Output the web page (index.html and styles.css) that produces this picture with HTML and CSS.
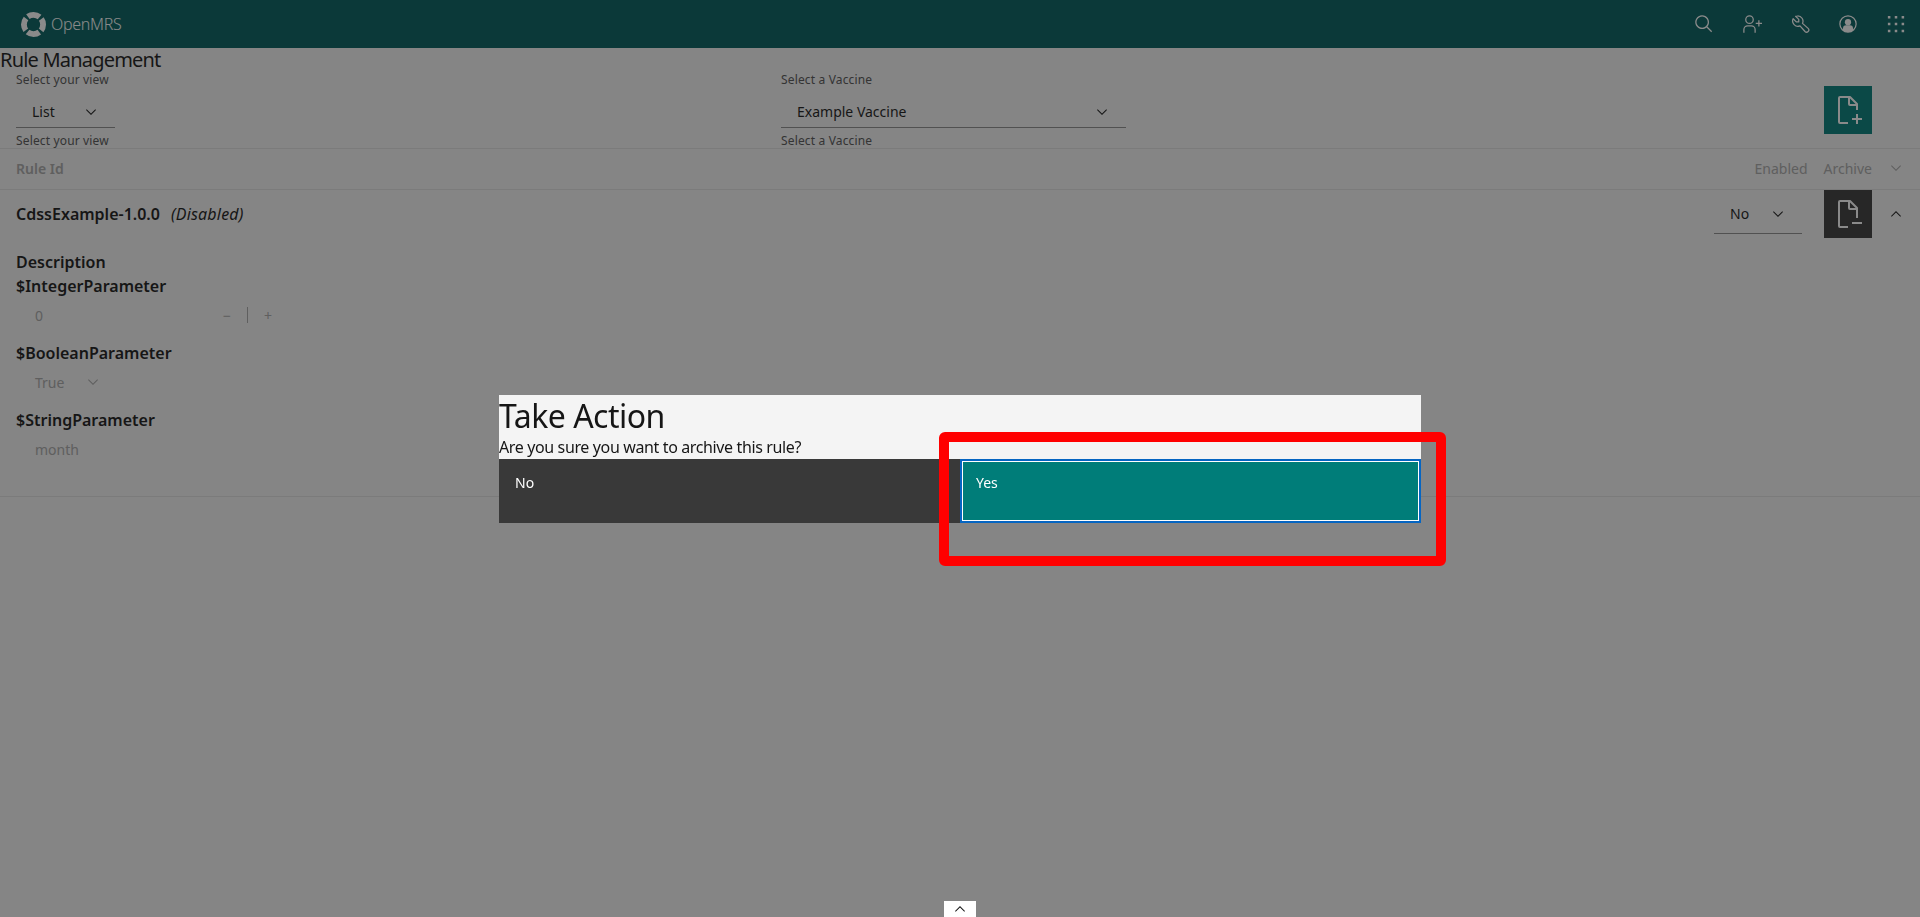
FILE: index.html
```html
<!DOCTYPE html>
<html lang="en">
<head>
    <meta charset="UTF-8">
    <meta name="viewport" content="width=device-width, initial-scale=1.0">
    <title>Rule Management</title>
    <link rel="stylesheet" href="styles.css">
</head>
<body>
    <header class="topbar">
        <a class="brand">
            <svg class="brand-logo" viewBox="0 0 24 24" aria-hidden="true">
                <circle cx="12" cy="12" r="9.2" fill="none" stroke="#fff" stroke-width="5.6" stroke-dasharray="12.05 2.4" stroke-dashoffset="6.02"/>
            </svg>
            <span>OpenMRS</span>
        </a>
        <nav class="topbar-actions">
            <button class="icon-btn"><svg viewBox="0 0 32 32"><path d="M29 27.590l-7.550-7.550a11.020 11.020 0 1 0-1.410 1.410L27.590 29zM4 13a9 9 0 1 1 9 9 9.010 9.010 0 0 1-9-9z"/></svg></button>
            <button class="icon-btn"><svg viewBox="0 0 32 32"><path d="M32 14h-4v-4h-2v4h-4v2h4v4h2v-4h4zM12 4a5 5 0 1 1-5 5 5 5 0 0 1 5-5m0-2a7 7 0 1 0 7 7 7 7 0 0 0-7-7zM22 30h-2v-5a5 5 0 0 0-5-5H9a5 5 0 0 0-5 5v5H2v-5a7 7 0 0 1 7-7h6a7 7 0 0 1 7 7z"/></svg></button>
            <button class="icon-btn"><svg viewBox="0 0 32 32"><path fill="none" stroke="#fff" stroke-width="2" stroke-linejoin="round" d="M12 3a8 8 0 0 0-3 .6l5 5v4h-4l-5-5A8.500 8.500 0 0 0 16 19l8 9a3.500 3.500 0 0 0 5-5l-9-8A8.500 8.500 0 0 0 12 3z"/></svg></button>
            <button class="icon-btn"><svg viewBox="0 0 32 32"><path d="M16 8a5 5 0 1 0 5 5 5 5 0 0 0-5-5z"/><path d="M16 2a14 14 0 1 0 14 14A14.016 14.016 0 0 0 16 2zm8 22.790V23a5 5 0 0 0-5-5h-6a5 5 0 0 0-5 5v1.790a12 12 0 1 1 16 0z"/></svg></button>
            <button class="icon-btn"><svg viewBox="0 0 32 32"><path d="M3 3h4v4H3zM14 3h4v4h-4zM25 3h4v4h-4zM3 14h4v4H3zM14 14h4v4h-4zM25 14h4v4h-4zM3 25h4v4H3zM14 25h4v4h-4zM25 25h4v4h-4z"/></svg></button>
        </nav>
    </header>

    <main>
        <h1 class="page-title">Rule Management</h1>

        <section class="filters">
            <div class="field field-view">
                <label class="field-label">Select your view</label>
                <div class="select">
                    <span>List</span>
                    <svg class="chevron" viewBox="0 0 32 32"><path d="M16 22L6 12l1.400-1.400 8.600 8.600 8.600-8.600L26 12z"/></svg>
                </div>
                <p class="field-label helper">Select your view</p>
            </div>
            <div class="field field-vaccine">
                <label class="field-label">Select a Vaccine</label>
                <div class="select">
                    <span>Example Vaccine</span>
                    <svg class="chevron" viewBox="0 0 32 32"><path d="M16 22L6 12l1.400-1.400 8.600 8.600 8.600-8.600L26 12z"/></svg>
                </div>
                <p class="field-label helper">Select a Vaccine</p>
            </div>
            <button class="square-btn primary">
                <svg viewBox="0 0 32 32"><path d="M30 24h-4v-4h-2v4h-4v2h4v4h2v-4h4zM16 28H8V4h8v6a2 2 0 0 0 2 2h6v4h2v-6a.91.91 0 0 0-.3-.7l-7-7A.91.91 0 0 0 18 2H8a2 2 0 0 0-2 2v24a2 2 0 0 0 2 2h8zm2-23.600l5.600 5.600H18z"/></svg>
            </button>
        </section>

        <section class="rules">
            <div class="rules-head">
                <span class="rules-id">Rule Id</span>
                <span class="rules-col">Enabled</span>
                <span class="rules-col rules-archive">Archive</span>
                <svg class="chevron muted" viewBox="0 0 32 32"><path d="M16 22L6 12l1.400-1.400 8.600 8.600 8.600-8.600L26 12z"/></svg>
            </div>

            <article class="rule">
                <div class="rule-summary">
                    <strong class="rule-name">CdssExample-1.0.0</strong>
                    <em class="rule-state">(Disabled)</em>
                    <div class="select select-enabled">
                        <span>No</span>
                        <svg class="chevron" viewBox="0 0 32 32"><path d="M16 22L6 12l1.400-1.400 8.600 8.600 8.600-8.600L26 12z"/></svg>
                    </div>
                    <button class="square-btn dark">
                        <svg viewBox="0 0 32 32"><path d="M20 24h10v2H20zM16 28H8V4h8v6a2 2 0 0 0 2 2h6v8h2V10a.91.91 0 0 0-.3-.7l-7-7A.91.91 0 0 0 18 2H8a2 2 0 0 0-2 2v24a2 2 0 0 0 2 2h8zm2-23.600l5.600 5.600H18z"/></svg>
                    </button>
                    <svg class="chevron toggle" viewBox="0 0 32 32"><path d="M16 10l10 10-1.400 1.400L16 12.800l-8.600 8.600L6 20z"/></svg>
                </div>

                <div class="rule-body">
                    <h3 class="rule-desc">Description</h3>
                    <h4 class="param-name">$IntegerParameter</h4>
                    <div class="param-value number">
                        <span class="number-text">0</span>
                        <span class="step">&minus;</span>
                        <span class="step-sep"></span>
                        <span class="step">+</span>
                    </div>
                    <h4 class="param-name">$BooleanParameter</h4>
                    <div class="param-value">
                        <span class="bool-text">True</span>
                        <svg class="chevron muted" viewBox="0 0 32 32"><path d="M16 22L6 12l1.400-1.400 8.600 8.600 8.600-8.600L26 12z"/></svg>
                    </div>
                    <h4 class="param-name">$StringParameter</h4>
                    <div class="param-value">month</div>
                </div>
            </article>
        </section>
    </main>

    <div class="overlay"></div>

    <div class="modal">
        <h2 class="modal-title">Take Action</h2>
        <p class="modal-text">Are you sure you want to archive this rule?</p>
        <div class="modal-actions">
            <button class="modal-btn btn-no"><span>No</span></button>
            <button class="modal-btn btn-yes"><span>Yes</span></button>
        </div>
    </div>

    <div class="highlight"></div>

    <button class="footer-toggle">
        <svg viewBox="0 0 32 32"><path d="M16 10l10 10-1.400 1.400L16 12.800l-8.600 8.600L6 20z"/></svg>
    </button>
</body>
</html>
```

FILE: styles.css
```css
* {
    box-sizing: border-box;
}
html, body {
    height: 100%;
}
body {
    margin: 0;
    overflow: hidden;
    font-family: "Noto Sans", "Open Sans", Arial, sans-serif;
    background-color: #f4f4f4;
    color: #161616;
    font-size: 14px;
}
button {
    font-family: inherit;
    border: none;
    padding: 0;
    background: none;
}
svg {
    display: block;
    fill: currentColor;
}

.topbar {
    height: 48px;
    background-color: #005d5d;
    color: #fff;
    display: flex;
    align-items: center;
    justify-content: space-between;
}
.brand {
    display: flex;
    align-items: center;
    gap: 5px;
    padding-left: 21px;
    font-size: 16px;
    font-weight: 300;
    letter-spacing: -0.3px;
}
.brand-logo {
    width: 25px;
    height: 25px;
}
.topbar-actions {
    display: flex;
}
.icon-btn {
    width: 48px;
    height: 48px;
    display: flex;
    align-items: center;
    justify-content: center;
    color: #fff;
}
.icon-btn svg {
    width: 20px;
    height: 20px;
}

.page-title {
    margin: 0;
    font-size: 20px;
    font-weight: 400;
    line-height: 24px;
    letter-spacing: -0.8px;
}

.filters {
    display: flex;
    padding: 0 48px 0 16px;
    height: 77px;
    border-bottom: 1px solid #e0e0e0;
}
.field {
    flex: none;
}
.field-view {
    width: 765px;
}
.field-vaccine {
    width: 1043px;
}
.field-label {
    margin: 0;
    font-size: 12px;
    line-height: 16px;
    color: #525252;
    display: block;
    letter-spacing: 0.15px;
}
.helper {
    margin-top: 5px;
}
.select {
    display: flex;
    align-items: center;
    justify-content: space-between;
    height: 32px;
    margin-top: 8px;
    padding: 0 16px;
    border-bottom: 1px solid #8d8d8d;
}
.field-view .select {
    width: 99px;
}
.field-vaccine .select {
    width: 345px;
}
.chevron {
    width: 16px;
    height: 16px;
}
.chevron.muted {
    color: #a8a8a8;
}

.square-btn {
    width: 48px;
    height: 48px;
    display: flex;
    align-items: center;
    justify-content: center;
    color: #fff;
    flex: none;
}
.square-btn svg {
    width: 32px;
    height: 32px;
}
.primary {
    background-color: #007d79;
    margin-top: 14px;
}
.dark {
    background-color: #393939;
}

.rules-head {
    height: 41px;
    display: flex;
    align-items: center;
    padding: 0 16px 2px;
    border-bottom: 1px solid #e0e0e0;
    color: #a8a8a8;
}
.rules-id {
    font-weight: 600;
    margin-right: auto;
}
.rules-archive {
    margin: 0 16px;
}
.rule {
    border-bottom: 1px solid #e0e0e0;
}
.rule-summary {
    height: 48px;
    display: flex;
    align-items: center;
    padding: 0 16px;
}
.rule-name {
    font-size: 16px;
    font-weight: 600;
    margin-right: 11px;
}
.rule-state {
    font-size: 16px;
    letter-spacing: 0.2px;
    margin-right: auto;
}
.select-enabled {
    width: 88px;
    margin: 0 22px 0 0;
    height: 40px;
}
.toggle {
    margin-left: 16px;
}

.rule-body {
    padding: 12px 16px 21px;
}
.rule-desc,
.param-name {
    margin: 0;
    font-size: 16px;
    font-weight: 600;
    line-height: 24px;
}
.param-value {
    height: 43px;
    display: flex;
    align-items: center;
    padding: 0 0 9px 19px;
    color: #a8a8a8;
}
.number-text {
    width: 184px;
}
.step {
    width: 16px;
    text-align: center;
}
.step-sep {
    width: 1px;
    height: 16px;
    background-color: #a8a8a8;
    margin: 0 12px;
}
.bool-text {
    margin-right: 21px;
}

.overlay {
    position: fixed;
    inset: 0;
    background-color: rgba(22, 22, 22, 0.5);
}

.modal {
    position: fixed;
    left: 499px;
    top: 395px;
    width: 922px;
    background-color: #f4f4f4;
}
.modal-title {
    margin: 0;
    font-size: 32px;
    font-weight: 400;
    line-height: 41px;
    letter-spacing: -0.5px;
}
.modal-text {
    margin: 0;
    font-size: 16px;
    line-height: 23px;
    letter-spacing: -0.37px;
}
.modal-actions {
    display: grid;
    grid-template-columns: 1fr 1fr;
    height: 64px;
}
.modal-btn {
    color: #fff;
    font-size: 14px;
    line-height: 18px;
    text-align: left;
    padding: 15px 16px;
    display: flex;
    align-items: flex-start;
}
.btn-no {
    background-color: #393939;
}
.btn-yes {
    background-color: #007d79;
    outline: 2px solid #0565c2;
    outline-offset: -2px;
    box-shadow: inset 0 0 0 3px #fff;
}

.highlight {
    position: fixed;
    left: 939px;
    top: 432px;
    width: 507px;
    height: 134px;
    border: 10px solid #f00;
    border-radius: 6px;
}

.footer-toggle {
    position: fixed;
    left: 944px;
    bottom: 0;
    width: 32px;
    height: 16px;
    background-color: #fff;
    color: #161616;
    display: flex;
    justify-content: center;
    align-items: center;
}
.footer-toggle svg {
    width: 16px;
    height: 16px;
}
```
